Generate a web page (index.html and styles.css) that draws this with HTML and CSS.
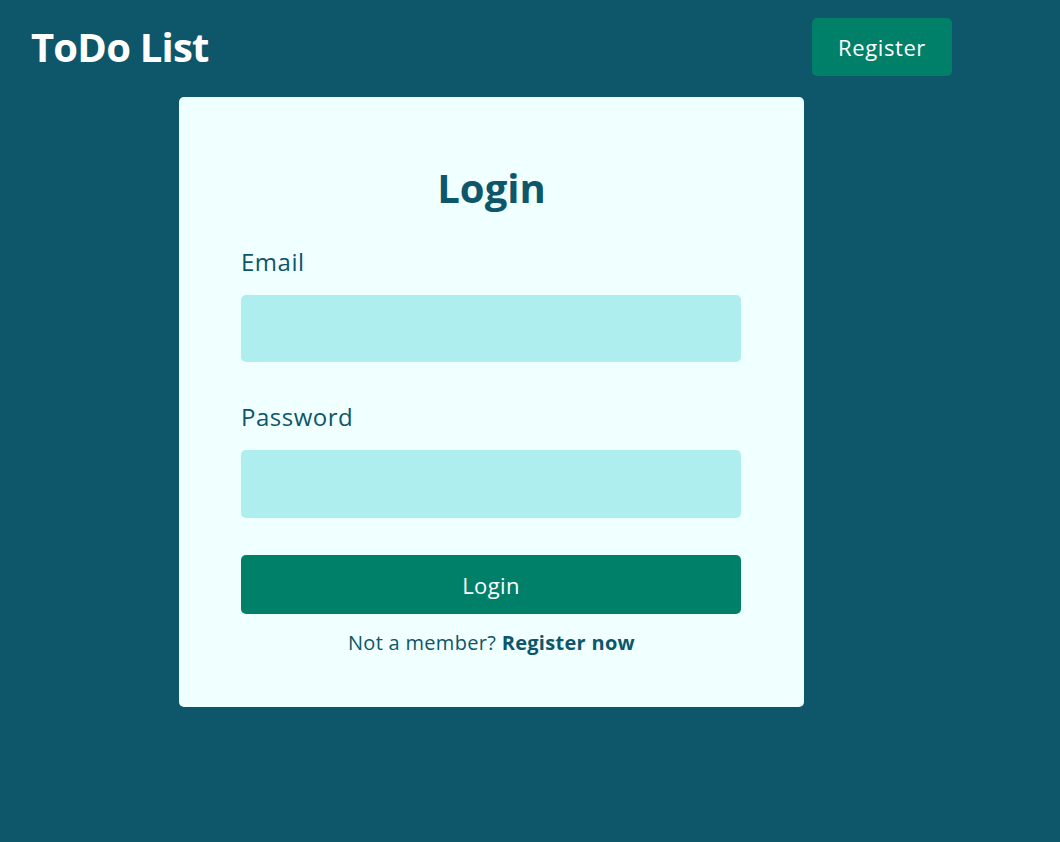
FILE: index.html
```html
<!DOCTYPE html>
<html lang="en">
<head>
<meta charset="utf-8">
<title>ToDo List</title>
<link rel="stylesheet" href="styles.css">
</head>
<body>
<header class="topbar">
  <h1 class="brand">ToDo List</h1>
  <button class="nav-btn" type="button">Register</button>
</header>
<main class="main">
  <form class="card">
    <h2 class="card-title">Login</h2>
    <label class="field-label" for="email">Email</label>
    <input class="field-input email" id="email" type="email">
    <label class="field-label pw" for="password">Password</label>
    <input class="field-input pass" id="password" type="password">
    <button class="submit" type="button">Login</button>
    <p class="hint">Not a member? <a class="hint-link" href="#">Register now</a></p>
  </form>
</main>
</body>
</html>
```
FILE: styles.css
```css
* { box-sizing: border-box; }
html, body { margin: 0; padding: 0; }
body {
  background: #0e5669;
  font-family: "Open Sans", "Noto Sans", sans-serif;
  color: #0e5669;
  width: 1060px;
  height: 842px;
  overflow: hidden;
}
.topbar {
  display: flex;
  justify-content: space-between;
  align-items: center;
  padding: 18px 108px 0 31px;
  height: 76px;
}
.brand {
  margin: 0;
  color: #ffffff;
  font-size: 40px;
  font-weight: 700;
  line-height: 58px;
  letter-spacing: -0.8px;
}
.nav-btn {
  width: 140px;
  height: 58px;
  border: none;
  border-radius: 5px;
  background: #008069;
  color: #ffffff;
  font-family: inherit;
  font-size: 22px;
  letter-spacing: 0.6px;
  padding: 0;
}
.main {
  padding: 21px 0 0 179px;
}
.card {
  width: 625px;
  height: 610px;
  background: #f0ffff;
  border-radius: 5px;
  padding: 61px 62px 0 62px;
  display: flex;
  flex-direction: column;
}
.card-title {
  margin: 0;
  text-align: center;
  font-size: 40px;
  font-weight: 700;
  line-height: 60px;
}
.field-label {
  margin-top: 27px;
  font-size: 24px;
  line-height: 34px;
  letter-spacing: 0.5px;
}
.field-label.pw { margin-top: 38px; }
.field-input {
  margin-top: 16px;
  width: 500px;
  height: 67px;
  border: none;
  border-radius: 5px;
  background: #afeeee;
}
.field-input.pass { height: 68px; }
.submit {
  margin-top: 37px;
  width: 500px;
  height: 59px;
  border: none;
  border-radius: 5px;
  background: #008069;
  color: #ffffff;
  font-family: inherit;
  font-size: 22px;
  letter-spacing: 0.4px;
  padding: 0;
}
.hint {
  margin: 15px 0 0 0;
  text-align: center;
  font-size: 20px;
  line-height: 28px;
  letter-spacing: 0.3px;
}
.hint-link {
  color: #0e5669;
  font-weight: 700;
  text-decoration: none;
}
```
